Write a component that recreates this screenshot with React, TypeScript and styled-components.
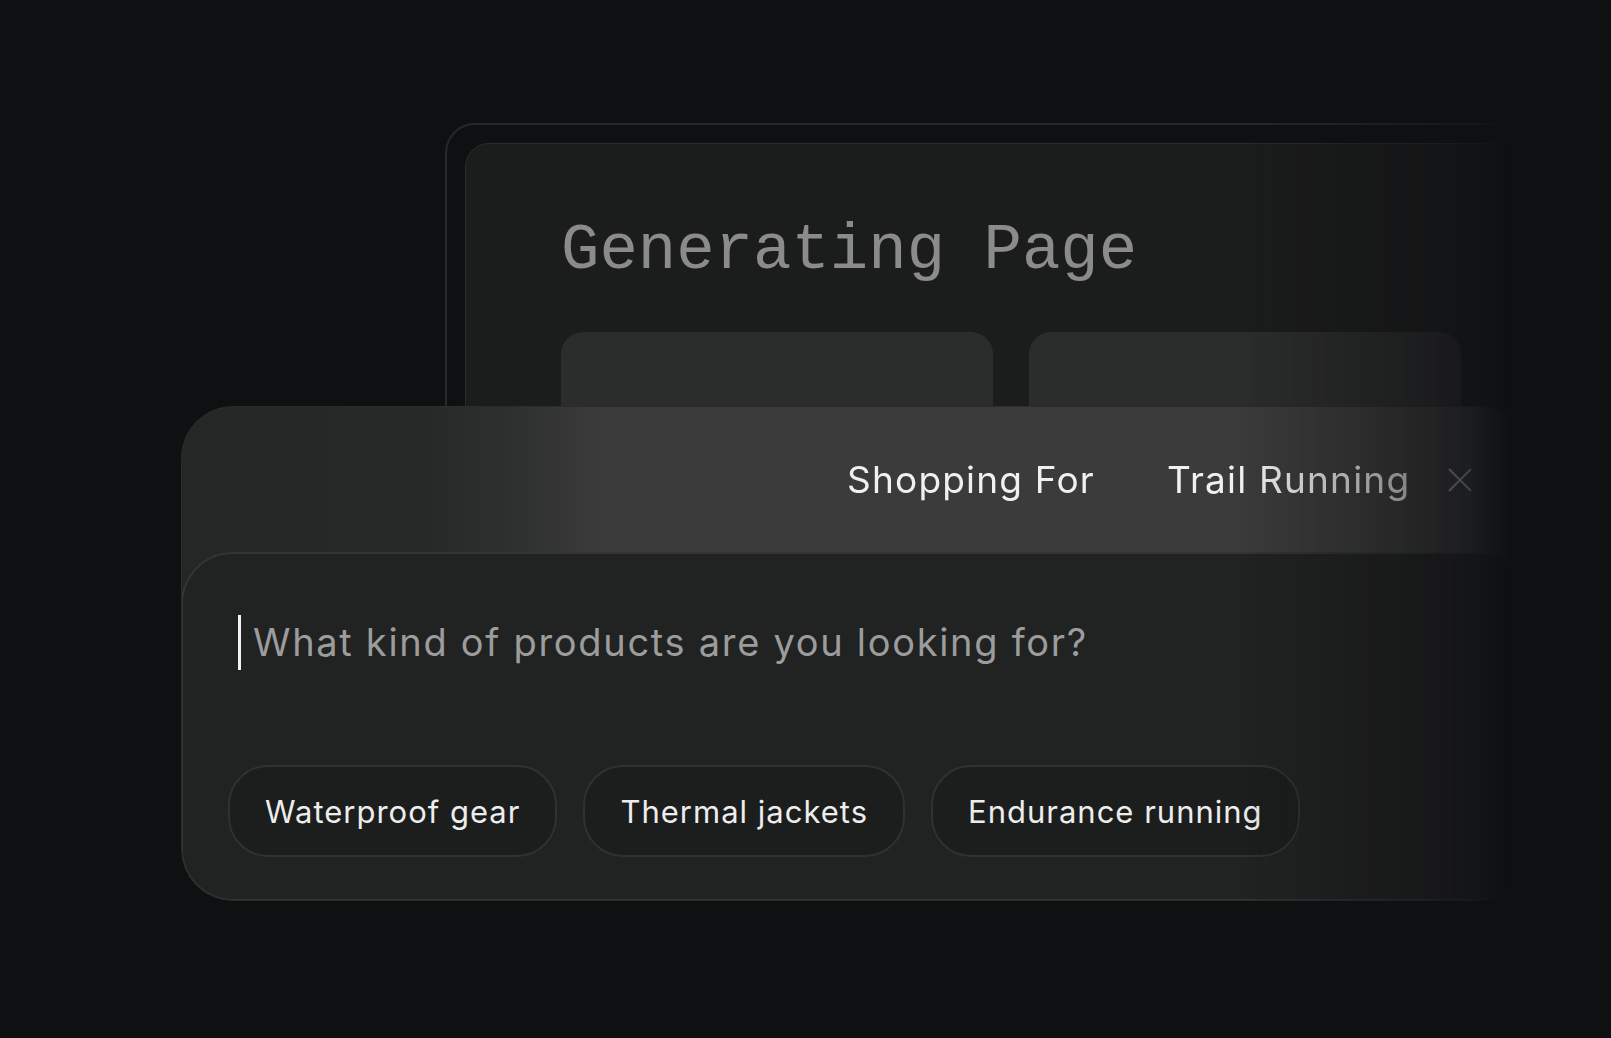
import styled, { createGlobalStyle } from "styled-components";

const GlobalStyle = createGlobalStyle`
  html, body {
    margin: 0;
    background: #0f1012;
  }
  body {
    font-family: Inter, "Noto Sans", sans-serif;
  }
`;

const chips = ["Waterproof gear", "Thermal jackets", "Endurance running"];

export default function App() {
  return (
    <>
      <GlobalStyle />
      <Scene>
        <BackWindow>
          <BackInner>
            <Title>Generating Page</Title>
            <CardRow>
              <Placeholder />
              <Placeholder />
            </CardRow>
          </BackInner>
        </BackWindow>

        <FrontPanel>
          <Header>
            <Label>Shopping For</Label>
            <Value>Trail Running</Value>
            <CloseIcon viewBox="0 0 28 28">
              <path d="M3 3 L25 25 M25 3 L3 25" />
            </CloseIcon>
          </Header>
          <InputBox>
            <Prompt>
              <Cursor />
              <PromptText>What kind of products are you looking for?</PromptText>
            </Prompt>
            <ChipRow>
              {chips.map((c) => (
                <Chip key={c}>{c}</Chip>
              ))}
            </ChipRow>
          </InputBox>
        </FrontPanel>
      </Scene>
    </>
  );
}

const Scene = styled.div`
  width: 1611px;
  height: 1038px;
  overflow: hidden;
  display: grid;
  grid-template: 1fr / 1fr;
  -webkit-mask-image: linear-gradient(90deg, #000 1240px, rgba(0, 0, 0, 0.55) 1400px, rgba(0, 0, 0, 0.3) 1470px, transparent 1510px);
  mask-image: linear-gradient(90deg, #000 1240px, rgba(0, 0, 0, 0.55) 1400px, rgba(0, 0, 0, 0.3) 1470px, transparent 1510px);
`;

const BackWindow = styled.div`
  grid-area: 1 / 1;
  align-self: start;
  justify-self: start;
  margin: 123px 0 0 445px;
  width: 1150px;
  height: 520px;
  box-sizing: border-box;
  border: 2px solid #27282a;
  border-radius: 30px;
  padding: 18px;
`;

const BackInner = styled.div`
  height: 100%;
  box-sizing: border-box;
  background: #1b1c1c;
  border: 1px solid #2b2c2c;
  border-radius: 24px;
  padding: 75px 0 0 95px;
`;

const Title = styled.div`
  font-family: "Liberation Mono", "DejaVu Sans Mono", monospace;
  font-size: 64px;
  line-height: 64px;
  color: #8b8b8b;
  white-space: nowrap;
`;

const CardRow = styled.div`
  display: flex;
  gap: 36px;
  margin-top: 49px;
`;

const Placeholder = styled.div`
  width: 432px;
  height: 200px;
  background: #2b2c2c;
  border-radius: 22px;
`;

const FrontPanel = styled.div`
  grid-area: 1 / 1;
  align-self: start;
  justify-self: start;
  margin: 406px 0 0 181px;
  width: 1350px;
  height: 495px;
  box-sizing: border-box;
  border: 1px solid #2a2b2b;
  border-radius: 52px;
  overflow: hidden;
  display: flex;
  flex-direction: column;
  background: linear-gradient(90deg, #252626 0px, #272828 240px, #2e2f2f 330px, #3b3b3b 420px, #3b3b3b 100%);
`;

const Header = styled.div`
  height: 145px;
  flex: none;
  display: flex;
  align-items: center;
  padding-left: 665px;
  font-size: 37px;
  letter-spacing: 1.2px;
  color: #f0f0f0;
  white-space: nowrap;
`;

const Label = styled.span`
  margin-right: 72px;
`;

const Value = styled.span`
  margin-right: 36px;
`;

const CloseIcon = styled.svg`
  width: 28px;
  height: 28px;
  fill: none;
  stroke: #b4b4b4;
  stroke-width: 2;
`;

const InputBox = styled.div`
  flex: 1;
  margin: 0 -1px -1px -1px;
  border: 2px solid #333434;
  border-radius: 52px;
  background: #212222;
  padding: 60px 0 0 45px;
  display: flex;
  flex-direction: column;
`;

const Prompt = styled.div`
  display: flex;
  align-items: center;
  height: 56px;
  padding-left: 10px;
`;

const Cursor = styled.div`
  width: 3px;
  height: 55px;
  background: #f2f2f2;
  margin-right: 12px;
`;

const PromptText = styled.span`
  font-size: 38px;
  letter-spacing: 1.7px;
  color: #9c9c9c;
  white-space: nowrap;
`;

const ChipRow = styled.div`
  display: flex;
  gap: 26px;
  margin-top: 95px;
`;

const Chip = styled.div`
  height: 92px;
  box-sizing: border-box;
  display: flex;
  align-items: center;
  padding: 0 35px;
  border: 2px solid #303131;
  border-radius: 40px;
  background: #1c1d1d;
  color: #ededed;
  font-size: 31px;
  letter-spacing: 1px;
  white-space: nowrap;
`;
